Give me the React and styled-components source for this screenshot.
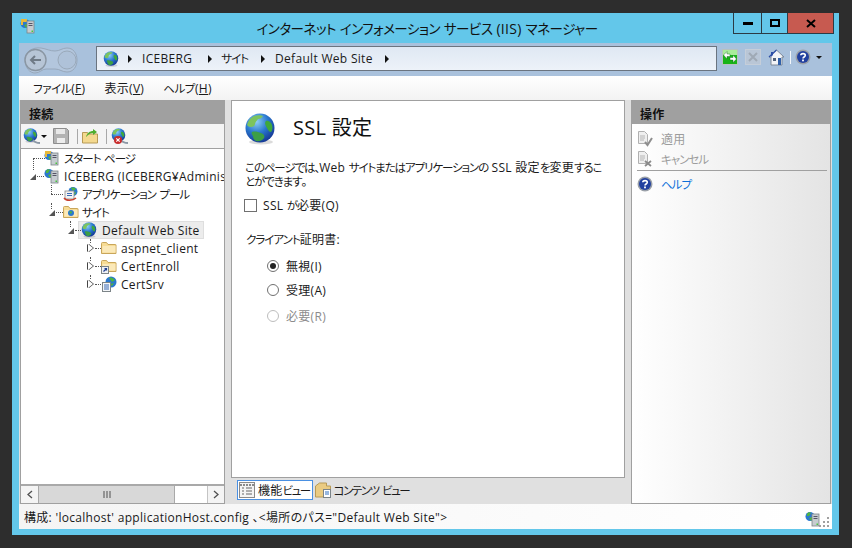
import React from 'react'
import styled, {createGlobalStyle} from 'styled-components'

const Global = createGlobalStyle`
  html, body { margin: 0; height: 100%; background: #2d2d2d; }
  body {
    font-family: "Open Sans", "Noto Sans CJK JP", sans-serif;
    font-size: 12px;
    letter-spacing: .3px;
    font-feature-settings: "palt";
    color: #1a1a1a;
  }
`

const Kana = styled.span`
  font-size: 11.5px;
  letter-spacing: -1px;
`
const T = ({children}) => children.split(/([\u3040-\u30ff、]+)/).map((part, i) => (
  i % 2 ? <Kana key={i}>{part}</Kana> : part
))

const Desktop = styled.div`
  width: 852px;
  height: 548px;
  padding: 13px 13px 13px 12px;
  box-sizing: border-box;
`
const Frame = styled.div`
  height: 522px;
  background: #63c7ea;
  display: flex;
  flex-direction: column;
`
const TitleBar = styled.div`
  height: 30px;
  flex: none;
  display: grid;
  grid-template-columns: 1fr auto 1fr;
  padding: 0 5px 0 8px;
`
const TitleIcon = styled.div`
  padding-top: 5px;
`
const TitleText = styled.div`
  font-size: 14px;
  line-height: 31px;
  color: #111;
  ${Kana} {
    font-size: 13.5px;
    letter-spacing: -.5px;
  }
`
const Controls = styled.div`
  display: flex;
  justify-content: flex-end;
  align-items: flex-start;
`
const Control = styled.div`
  width: ${p => p.$w}px;
  height: 21px;
  box-sizing: border-box;
  border: 1px solid #2b3b45;
  border-top: 0;
  margin-left: -1px;
  background: ${p => p.$close ? '#c75a50' : 'transparent'};
  display: flex;
  align-items: center;
  justify-content: center;
`
const Client = styled.div`
  margin: 0 7px 6px;
  flex: 1;
  display: flex;
  flex-direction: column;
  min-height: 0;
`
const AddressBar = styled.div`
  height: 33px;
  flex: none;
  background: #a9c1dc;
  display: flex;
  padding: 3px 6px 0 5px;
  box-sizing: border-box;
`
const NavButtons = styled.div`
  width: 72px;
  flex: none;
`
const AddressBox = styled.div`
  width: 621px;
  height: 25px;
  box-sizing: border-box;
  border: 1px solid #6a7480;
  background: linear-gradient(#dfe8f3, #edf2f9);
  display: flex;
  align-items: center;
  padding-left: 6px;
  flex: none;
`
const Crumb = styled.span`
  margin-left: ${p => p.$gap || 0}px;
  white-space: nowrap;
`
const Arrow = styled.span`
  width: 0;
  height: 0;
  margin-left: ${p => p.$gap}px;
  border-left: 4px solid #111;
  border-top: 4px solid transparent;
  border-bottom: 4px solid transparent;
`
const NavTools = styled.div`
  display: flex;
  align-items: center;
  margin-left: 5px;
  height: 22px;
  gap: 7px;
`
const ToolSep = styled.div`
  width: 1px;
  height: 13px;
  background: #f4f7fb;
  margin: 0 -3px 0 -2px;
`
const BarSep = styled.div`
  width: 1px;
  height: 15px;
  background: #a8a8a8;
  margin: 0 ${p => p.$right}px 0 ${p => p.$left}px;
`
const Caret = styled.span`
  width: 0;
  height: 0;
  margin: ${p => p.$m || '0 0 0 -2px'};
  border-top: 3px solid #111;
  border-left: 3px solid transparent;
  border-right: 3px solid transparent;
`
const MenuBar = styled.div`
  height: 24px;
  flex: none;
  background: linear-gradient(#fff, #f3f3f3);
  display: flex;
  align-items: center;
  padding-left: 14px;
  gap: 19px;
  u { text-underline-offset: 1px; }
  ${Kana} { letter-spacing: -.4px; }
`
const Main = styled.div`
  flex: 1;
  min-height: 0;
  background: #e0e0e0;
  display: grid;
  grid-template-columns: 205px 394px 200px;
  column-gap: 6px;
  padding: 0 1px;
`
const Panel = styled.div`
  border: 1px solid #a0a0a0;
  border-top: 0;
  background: ${p => p.$shade ? 'linear-gradient(90deg, #fff, #e4e4e4)' : '#fff'};
  display: flex;
  flex-direction: column;
  min-height: 0;
`
const PanelHead = styled.div`
  height: 24px;
  flex: none;
  background: #a0a0a0;
  line-height: 29px;
  padding-left: 8px;
  font-weight: 700;
  color: #111;
`
const Toolbar = styled.div`
  height: 24px;
  flex: none;
  border-bottom: 1px solid #a0a0a0;
  background: #f4f4f4;
  display: flex;
  align-items: center;
  padding-left: 2px;
`
const TreeBox = styled.div`
  flex: 1;
  overflow: hidden;
`
const TreeRow = styled.div`
  position: relative;
  height: 18px;
  display: flex;
  align-items: center;
  white-space: nowrap;
  padding-left: ${p => p.$x}px;
`
const Dots = styled.span`
  position: absolute;
  left: ${p => p.$x}px;
  top: 9px;
  width: ${p => p.$w}px;
  border-top: 1px dotted #555;
`
const VDots = styled.span`
  position: absolute;
  left: ${p => p.$x}px;
  top: ${p => p.$top}px;
  height: ${p => p.$h}px;
  border-left: 1px dotted #555;
`
const Twisty = styled.span`
  position: absolute;
  left: ${p => p.$x}px;
  top: ${p => p.$open ? 7 : 5}px;
  width: 0;
  height: 0;
  ${p => p.$open
    ? 'border-bottom: 6px solid #555; border-left: 6px solid transparent;'
    : 'border-left: 5px solid #fff; border-top: 4px solid transparent; border-bottom: 4px solid transparent; filter: drop-shadow(1px 0 0 #444) drop-shadow(-1px 0 0 #444);'}
`
const NodeText = styled.span`
  margin-left: ${p => p.$gap || 4}px;
`
const SelectedNode = styled.span`
  display: flex;
  align-items: center;
  height: 18px;
  box-sizing: border-box;
  margin-left: -2px;
  padding: 0 3px 0 2px;
  background: #ececec;
  border: 1px solid #dedede;
  border-left-width: 0;
  border-right-width: 0;
  box-shadow: 1px 0 0 #dedede, -1px 0 0 #dedede;
`
const Scrollbar = styled.div`
  height: 17px;
  flex: none;
  border-top: 2px solid #a9a9a9;
  display: grid;
  grid-template-columns: 17px 137px 32px 17px;
  background: #fff;
`
const ScrollBtn = styled.div`
  background: #f4f4f4;
  display: flex;
  align-items: center;
  justify-content: center;
  &:last-child { border-left: 1px solid #c4c4c4; }
`
const Thumb = styled.div`
  background: #d8d8d8;
  border: 1px solid #a9a9a9;
  border-width: 0 1px;
  display: flex;
  align-items: center;
  justify-content: center;
`
const Center = styled.div`
  display: flex;
  flex-direction: column;
  min-height: 0;
`
const Page = styled(Panel)`
  border-top: 1px solid #a0a0a0;
  height: 378px;
  box-sizing: border-box;
  flex: none;
  padding: 11px 0 0 12px;
`
const PageHead = styled.div`
  display: flex;
  align-items: center;
  height: 34px;
  gap: 17px;
`
const PageTitle = styled.div`
  font-size: 20px;
  color: #111;
  margin-top: -6px;
`
const Desc = styled.p`
  margin: 15px 0 0 1px;
  line-height: 14px;
  white-space: nowrap;
  color: #1a1a1a;
  ${Kana} { letter-spacing: -1.1px; }
`
const CheckRow = styled.label`
  display: flex;
  align-items: center;
  margin-top: 7px;
  height: 18px;
  gap: 6px;
`
const CheckBox = styled.span`
  width: 13px;
  height: 13px;
  box-sizing: border-box;
  border: 1px solid #707070;
  background: #fff;
`
const GroupLabel = styled.div`
  margin: 16px 0 0 2px;
`
const RadioGroup = styled.div`
  margin: 9px 0 0 23px;
`
const RadioRow = styled.div`
  display: flex;
  align-items: center;
  height: 18px;
  margin-bottom: ${p => p.$after}px;
  gap: 7px;
  color: ${p => p.$off ? '#8c8c8c' : '#1a1a1a'};
`
const Radio = styled.span`
  width: 12px;
  height: 12px;
  box-sizing: border-box;
  border-radius: 50%;
  border: 1px solid ${p => p.$off ? '#bdbdbd' : '#707070'};
  display: flex;
  align-items: center;
  justify-content: center;
  &::after {
    content: '';
    width: 6px;
    height: 6px;
    border-radius: 50%;
    background: ${p => p.$on ? '#222' : 'transparent'};
  }
`
const Tabs = styled.div`
  display: flex;
  align-items: center;
  padding: 2px 0 0 6px;
  height: 20px;
  ${Kana} { letter-spacing: -1.5px; }
`
const Tab = styled.div`
  display: flex;
  align-items: center;
  gap: 3px;
  height: 20px;
  box-sizing: border-box;
  padding: 0 ${p => p.$sel ? '2px' : '0'} 0 ${p => p.$sel ? '1px' : '2px'};
  border: ${p => p.$sel ? '1px solid #4a90e2' : '0'};
  background: ${p => p.$sel ? '#fff' : 'none'};
`
const Actions = styled.div`
  padding: 5px 3px 0 5px;
`
const Action = styled.div`
  display: flex;
  align-items: center;
  height: 20px;
  gap: 8px;
  color: ${p => p.$link ? '#0d6fd9' : '#9c9c9c'};
`
const ActionSep = styled.div`
  height: 1px;
  background: #a0a0a0;
  margin: 1px 0 3px;
`
const StatusBar = styled.div`
  height: 25px;
  flex: none;
  background: linear-gradient(90deg, #f4f4f4, #fff);
  display: flex;
  align-items: center;
  justify-content: space-between;
  padding: 0 3px 0 5px;
`
const StatusIcons = styled.div`
  display: flex;
  align-items: flex-end;
  align-self: flex-end;
  padding-bottom: 2px;
`
const Grip = styled.div`
  display: grid;
  grid-template-columns: repeat(3, 2px);
  grid-auto-rows: 2px;
  gap: 2px;
  margin-left: -2px;
  span { background: #a0a0a0; }
  span.none { background: none; }
`
const Icon = styled.svg`
  flex: none;
`
const ConnectWrap = styled.span`
  display: flex;
  flex: none;
`
const ConnectMark = styled.svg`
  flex: none;
  margin: 1px 0 0 -13px;
`

// drawings

const Globe = ({size = 16}) => (
  <Icon width={size} height={size} viewBox="0 0 32 32">
    <defs>
      <radialGradient id="sea" cx="38%" cy="28%" r="78%">
        <stop offset="0" stopColor="#8fd0f4" />
        <stop offset=".5" stopColor="#2a78cf" />
        <stop offset="1" stopColor="#12318f" />
      </radialGradient>
    </defs>
    <ellipse cx="17" cy="29" rx="12" ry="2.5" fill="#000" opacity=".14" />
    <circle cx="16" cy="15" r="14.5" fill="url(#sea)" />
    <path d="M10 3c3-1 7-1 9 0-1 2-3 3-5 3-1 2-3 3-3 5 0 2-2 3-4 3-2 0-3-1-4-2 1-4 3-7 7-9z" fill="#7cc45e" />
    <path d="M22 8c2-1 5 1 6 4 1 3 0 6-1 7-2 0-3-2-4-4-1-2-3-5-1-7z" fill="#3fa83c" />
    <path d="M8 19c3-1 6 0 9 1 3 1 4 3 3 5-1 2-5 4-8 3-2-1-3-3-3-5-1-1-2-3-1-4z" fill="#3c9e46" />
  </Icon>
)

const Server = ({size = 16}) => (
  <Icon width={size} height={size} viewBox="0 0 16 16">
    <circle cx="5" cy="5.500" r="4.500" fill="#2a78cf" />
    <path d="M2 3c1-2 3-2 4-1L4 5 2 5zM4 7l3-1 1 2-2 2z" fill="#4fb540" />
    <rect x="7" y="3" width="7" height="12" fill="#c6ccd0" stroke="#7c8488" strokeWidth=".8" />
    <path d="M8.500 5.500h4M8.500 7.500h4" stroke="#556" strokeWidth="1" />
    <rect x="11.500" y="12.500" width="1.500" height="1.500" fill="#46c83c" />
  </Icon>
)

const StartIcon = () => (
  <Icon width="16" height="16" viewBox="0 0 16 16">
    <circle cx="5" cy="5.500" r="4.500" fill="#2a78cf" />
    <path d="M1 1h6v3H3v3H1z" fill="#e7b93c" />
    <path d="M4 7l3-1 1 2-2 2z" fill="#4fb540" />
    <rect x="7" y="3" width="7" height="12" fill="#c6ccd0" stroke="#7c8488" strokeWidth=".8" />
    <path d="M8.500 5.500h4M8.500 7.500h4" stroke="#556" strokeWidth="1" />
    <rect x="11.500" y="12.500" width="1.500" height="1.500" fill="#46c83c" />
  </Icon>
)

const PoolIcon = () => (
  <Icon width="16" height="16" viewBox="0 0 16 16">
    <circle cx="10" cy="5.500" r="4.500" fill="#2a78cf" />
    <path d="M8 2c2-1 4 0 5 1l-3 2zM10 7l3-1-1 3z" fill="#4fb540" />
    <rect x="2" y="5" width="9" height="8" fill="#f2f2f2" stroke="#8a8a8a" strokeWidth=".8" />
    <path d="M4 7.500h5M4 9.500h5" stroke="#3b6bb5" strokeWidth="1" />
    <path d="M1 12c2 3 9 3 12 0" fill="none" stroke="#c8402e" strokeWidth="1.400" />
  </Icon>
)

const Folder = ({badge}) => (
  <Icon width="16" height="16" viewBox="0 0 16 16">
    <path d="M.5 3.500a1 1 0 0 1 1-1h4l1.500 2h7.500a.5.500 0 0 1 .5.500v8.500H.5z" fill="#f7dc95" stroke="#c9a65a" />
    <path d="M1.500 6h13v6.500h-13z" fill="#fbe9b9" />
    {badge === 'site' && <>
      <circle cx="8" cy="9" r="3" fill="#2a78cf" />
      <path d="M6 8c1-1 3-1 3 0l-1 2z" fill="#4fb540" />
    </>}
    {badge === 'link' && <>
      <rect x=".5" y="8.500" width="7" height="7" fill="#eef0f5" stroke="#7c8488" />
      <path d="M2.500 13.500l3-3M3.500 10.500h2v2" fill="none" stroke="#1f3f8f" strokeWidth="1.200" />
    </>}
  </Icon>
)

const WebDoc = () => (
  <Icon width="16" height="16" viewBox="0 0 16 16">
    <circle cx="10" cy="6" r="5.500" fill="#2a78cf" />
    <path d="M8 2c2-1 4 0 6 2l-3 2zM9 8l4-1-2 3z" fill="#4fb540" />
    <rect x="1.500" y="6.500" width="8" height="9" fill="#f4f6f8" stroke="#7c8488" />
    <path d="M3 9h5M3 11h5M3 13h5" stroke="#3b6bb5" strokeWidth="1" />
  </Icon>
)

const NavCluster = () => (
  <svg width="54" height="30" viewBox="0 0 54 30">
    <path d="M1 14C1 5 9 1 17 2c6 1 9 3 14 3s7-3 12-3c6 0 10 5 10 12s-4 12-10 12c-5 0-7-3-12-3h-9c-4 0-6 4-11 4C6 27 1 22 1 14z" fill="#b3c6dd" stroke="#98a8bb" />
    <circle cx="11.500" cy="14" r="10.500" fill="#b7c5d6" stroke="#8a96a3" strokeWidth="1.400" />
    <path d="M17 14H7M11 10l-4 4 4 4" fill="none" stroke="#6f7a86" strokeWidth="2" />
    <circle cx="43" cy="14" r="9" fill="#afc2d9" stroke="#9aa9ba" />
  </svg>
)

const Refresh = () => (
  <svg width="16" height="16" viewBox="0 0 16 16">
    <rect x=".5" y=".5" width="15" height="15" fill="#18b418" stroke="#b7c2bf" />
    <rect x="1" y="1" width="14" height="5" fill="#a8ec9a" />
    <path d="M1.500 6l3.500-3.500V5h3v2.500H5V10zM14.500 10L11 13.500V11H8V8.500h3V6z" fill="#fff" stroke="#0c5a1c" strokeWidth=".4" />
  </svg>
)

const StopIcon = () => (
  <svg width="16" height="16" viewBox="0 0 16 16">
    <rect x=".5" y=".5" width="15" height="15" fill="#b9c6d6" stroke="#c5ced9" />
    <path d="M4 4l8 8M12 4l-8 8" stroke="#9fa9b5" strokeWidth="2" />
  </svg>
)

const HomeIcon = () => (
  <svg width="17" height="17" viewBox="0 0 17 17">
    <path d="M8.500 1L1 8h2v8h11V8h2z" fill="#f2f4f7" stroke="#7e8a99" />
    <path d="M3 3h2v3l-2 2z" fill="#2d4fa8" />
    <path d="M1 8l7.500-7" stroke="#2d4fa8" strokeWidth="1.200" />
    <rect x="5" y="9" width="3" height="3" fill="#50607a" />
    <rect x="10" y="9" width="3" height="7" fill="#2f5fa8" />
  </svg>
)

const HelpIcon = ({size = 16}) => (
  <Icon width={size} height={size} viewBox="0 0 16 16">
    <circle cx="8" cy="8" r="7.500" fill="#9aa0a8" />
    <circle cx="8" cy="8" r="6" fill="#22409f" />
    <path d="M5.800 6.300C5.800 4 10.300 4 10.300 6.300c0 1.700-2.300 1.700-2.300 3.200" fill="none" stroke="#fff" strokeWidth="1.600" />
    <rect x="7.100" y="10.500" width="1.800" height="1.800" fill="#fff" />
  </Icon>
)

const DocMark = ({cross}) => (
  <Icon width="16" height="16" viewBox="0 0 16 16">
    <path d="M1.500 .5h6l3 3v9h-9z" fill="#efefef" stroke="#b0b0b0" />
    <path d="M3 5h5M3 7h5M3 9h4" stroke="#b5b5b5" />
    {cross
      ? <path d="M8 10l6 5M14 10l-6 5" stroke="#8a8a8a" strokeWidth="1.800" />
      : <path d="M8 11l2.500 3L15 7" fill="none" stroke="#8e8e8e" strokeWidth="2" />}
  </Icon>
)

const SaveIcon = () => (
  <Icon width="16" height="16" viewBox="0 0 16 16">
    <path d="M.5.5h13l2 2v13H.5z" fill="#b3b3b3" stroke="#8e8e8e" />
    <rect x="3" y="1" width="9" height="5" fill="#e8e8e8" />
    <rect x="4" y="10" width="8" height="5" fill="#ededed" />
  </Icon>
)

const UpFolder = () => (
  <Icon width="16" height="16" viewBox="0 0 16 16">
    <path d="M.5 4.500h5l1 1.500h9v9H.5z" fill="#f4d98f" stroke="#b79a56" />
    <path d="M4 9C5 5 8 3 11 3V1l4 3-4 3V5C8 5 6 7 4 9z" fill="#4fae2e" />
  </Icon>
)

const ConnectIcon = ({off}) => (
  <ConnectWrap>
    <Globe size={15} />
    <ConnectMark width="16" height="16" viewBox="0 0 16 16">
      <path d="M8 11c2 3 4 3 7 3" fill="none" stroke="#8b98a5" strokeWidth="1.800" />
      {off && <>
        <circle cx="5" cy="11" r="4" fill="#c92c2c" />
        <path d="M3.300 9.300l3.400 3.400M6.700 9.300l-3.400 3.400" stroke="#fff" strokeWidth="1.200" />
      </>}
    </ConnectMark>
  </ConnectWrap>
)

const FeatureTabIcon = () => (
  <Icon width="16" height="16" viewBox="0 0 16 16">
    <rect x=".5" y=".5" width="15" height="15" fill="#f4f4f4" stroke="#8a8a8a" />
    <path d="M1 3h14" stroke="#8a8a8a" strokeWidth="2" strokeDasharray="2 1" />
    <path d="M3 6h2M3 9h2M3 12h2M7 6h6M7 9h6M7 12h6" stroke="#666" />
  </Icon>
)

const ContentTabIcon = () => (
  <Icon width="16" height="16" viewBox="0 0 16 16">
    <path d="M.5 4l4-3h7v3h4v11H.5z" fill="#eacb82" stroke="#b79a56" />
    <rect x="8.500" y="7.500" width="7" height="8" fill="#fff" stroke="#7c8488" />
    <path d="M10 10h4M10 12h4" stroke="#2f6fc0" />
  </Icon>
)

const Chevron = ({right}) => (
  <svg width="8" height="9" viewBox="0 0 8 9">
    <path d={right ? 'M2 1l4 3.500L2 8' : 'M6 1L2 4.500 6 8'} fill="none" stroke="#505050" strokeWidth="1.300" />
  </svg>
)

const Tree = () => (
  <TreeBox>
    <TreeRow $x={23}>
      <Dots $x={12} $w={12} /><VDots $x={12} $top={9} $h={12} />
      <StartIcon /><NodeText><T>スタート ページ</T></NodeText>
    </TreeRow>
    <TreeRow $x={23}>
      <Twisty $x={9} $open /><Dots $x={16} $w={7} />
      <Server /><NodeText>ICEBERG (ICEBERG¥Administrator)</NodeText>
    </TreeRow>
    <TreeRow $x={42}>
      <VDots $x={30} $top={0} $h={9} /><Dots $x={30} $w={12} />
      <PoolIcon /><NodeText $gap={3}><T>アプリケーション プール</T></NodeText>
    </TreeRow>
    <TreeRow $x={42}>
      <VDots $x={30} $top={0} $h={6} /><Twisty $x={28} $open /><Dots $x={35} $w={7} />
      <Folder badge="site" /><NodeText $gap={3}><T>サイト</T></NodeText>
    </TreeRow>
    <TreeRow $x={60}>
      <VDots $x={49} $top={0} $h={6} /><Twisty $x={47} $open /><Dots $x={54} $w={6} />
      <SelectedNode>
        <Globe size={16} /><NodeText $gap={5}>Default Web Site</NodeText>
      </SelectedNode>
    </TreeRow>
    <TreeRow $x={80}>
      <VDots $x={69} $top={0} $h={4} /><Twisty $x={67} /><Dots $x={74} $w={6} />
      <Folder /><NodeText>aspnet_client</NodeText>
    </TreeRow>
    <TreeRow $x={80}>
      <VDots $x={69} $top={0} $h={4} /><Twisty $x={67} /><Dots $x={74} $w={6} />
      <Folder badge="link" /><NodeText>CertEnroll</NodeText>
    </TreeRow>
    <TreeRow $x={80}>
      <VDots $x={69} $top={0} $h={4} /><Twisty $x={67} /><Dots $x={74} $w={6} />
      <WebDoc /><NodeText>CertSrv</NodeText>
    </TreeRow>
  </TreeBox>
)

const App = () => (
  <>
    <Global />
    <Desktop>
      <Frame>
        <TitleBar>
          <TitleIcon><StartIcon /></TitleIcon>
          <TitleText><T>インターネット インフォメーション サービス (IIS) マネージャー</T></TitleText>
          <Controls>
            <Control $w={29}>
              <svg width="10" height="4"><rect width="10" height="3" y="1" fill="#000" /></svg>
            </Control>
            <Control $w={27}>
              <svg width="10" height="8"><rect x="1" y="1" width="8" height="6" fill="none" stroke="#000" strokeWidth="2" /></svg>
            </Control>
            <Control $w={47} $close>
              <svg width="10" height="9"><path d="M1 1l8 7M9 1L1 8" stroke="#000" strokeWidth="2" /></svg>
            </Control>
          </Controls>
        </TitleBar>
        <Client>
          <AddressBar>
            <NavButtons><NavCluster /></NavButtons>
            <AddressBox>
              <Globe size={16} />
              <Arrow $gap={9} /><Crumb $gap={10}>ICEBERG</Crumb>
              <Arrow $gap={16} /><Crumb $gap={9}><T>サイト</T></Crumb>
              <Arrow $gap={13} /><Crumb $gap={10}>Default Web Site</Crumb>
              <Arrow $gap={12} />
            </AddressBox>
            <NavTools>
              <Refresh /><StopIcon /><HomeIcon /><ToolSep /><HelpIcon /><Caret />
            </NavTools>
          </AddressBar>
          <MenuBar>
            <span><T>ファイル</T>(<u>F</u>)</span>
            <span>表示(<u>V</u>)</span>
            <span><T>ヘルプ</T>(<u>H</u>)</span>
          </MenuBar>
          <Main>
            <Panel>
              <PanelHead>接続</PanelHead>
              <Toolbar>
                <ConnectIcon /><Caret $m="0 6px 0 0" />
                <SaveIcon /><BarSep $left={8} $right={4} /><UpFolder /><BarSep $left={8} $right={4} /><ConnectIcon off />
              </Toolbar>
              <Tree />
              <Scrollbar>
                <ScrollBtn><Chevron /></ScrollBtn>
                <Thumb>
                  <svg width="8" height="7"><path d="M1 0v7M4 0v7M7 0v7" stroke="#505050" /></svg>
                </Thumb>
                <div />
                <ScrollBtn><Chevron right /></ScrollBtn>
              </Scrollbar>
            </Panel>
            <Center>
              <Page>
                <PageHead>
                  <Globe size={32} />
                  <PageTitle>SSL 設定</PageTitle>
                </PageHead>
                <Desc>
                  <T>このページでは、Web サイトまたはアプリケーションの SSL 設定を変更するこ</T><br />
                  <T>とができます。</T>
                </Desc>
                <CheckRow><CheckBox /><span>SSL <T>が</T>必要(Q)</span></CheckRow>
                <GroupLabel><T>クライアント</T>証明書:</GroupLabel>
                <RadioGroup>
                  <RadioRow $after={6}><Radio $on />無視(I)</RadioRow>
                  <RadioRow $after={8}><Radio />受理(A)</RadioRow>
                  <RadioRow $off><Radio $off />必要(R)</RadioRow>
                </RadioGroup>
              </Page>
              <Tabs>
                <Tab $sel><FeatureTabIcon /><span>機能<T>ビュー</T></span></Tab>
                <Tab><ContentTabIcon /><span><T>コンテンツ ビュー</T></span></Tab>
              </Tabs>
            </Center>
            <Panel $shade>
              <PanelHead>操作</PanelHead>
              <Actions>
                <Action><DocMark />適用</Action>
                <Action><DocMark cross /><span><T>キャンセル</T></span></Action>
                <ActionSep />
                <Action $link><HelpIcon /><span><T>ヘルプ</T></span></Action>
              </Actions>
            </Panel>
          </Main>
          <StatusBar>
            <span>構成: 'localhost' applicationHost.config 、&lt;場所のパス="Default Web Site"&gt;</span>
            <StatusIcons>
              <Server />
              <Grip>
                <span className="none" /><span className="none" /><span />
                <span className="none" /><span /><span />
                <span /><span /><span />
              </Grip>
            </StatusIcons>
          </StatusBar>
        </Client>
      </Frame>
    </Desktop>
  </>
)

export default App
